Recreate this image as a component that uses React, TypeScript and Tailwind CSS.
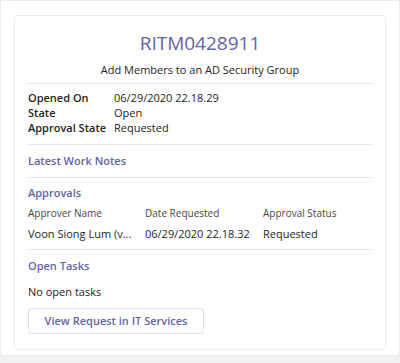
const FONT = "font-['Segoe_UI','Open_Sans',sans-serif]"

function Divider({ className = '' }: { className?: string }) {
  return <div className={`border-t border-[#e6e6e6] ${className}`} />
}

function Field({ label, value }: { label: string; value: string }) {
  return (
    <div className="flex leading-[15px]">
      <span className="w-[86px] shrink-0 font-semibold text-[#252423]">{label}</span>
      <span className="text-[#252423]">{value}</span>
    </div>
  )
}

export default function App() {
  return (
    <div className={`w-[400px] h-[363px] bg-[#f3f2f1] ${FONT}`}>
      <div className="h-[356px] bg-white border border-[#ebebeb] rounded-b-[4px] pt-[14px] px-[13px]">
        <div className="h-[335px] border border-[#ececec] rounded-[3px] px-[13px]">

          {/* Header */}
          <div className="pt-[13px] text-center">
            <div className="text-[19px] leading-[28px] text-[#6264a7]">RITM0428911</div>
            <div className="mt-[5px] text-[11px] leading-[16px] text-[#252423]">
              Add Members to an AD Security Group
            </div>
          </div>

          <Divider className="mt-[5px]" />

          {/* Fields */}
          <div className="pt-[6px] text-[11px]">
            <Field label="Opened On" value="06/29/2020 22.18.29" />
            <Field label="State" value="Open" />
            <Field label="Approval State" value="Requested" />
          </div>

          <Divider className="mt-[9px]" />

          <div className="pt-[6px] pb-[6px] text-[11px] font-semibold leading-[20px] text-[#6264a7]">Latest Work Notes</div>

          <Divider />

          {/* Approvals */}
          <div className="pt-[5px] text-[11px] font-semibold leading-[20px] text-[#6264a7]">Approvals</div>
          <div className="mt-[2px] grid grid-cols-[117px_118px_1fr] text-[10px] leading-[16px] text-[#484644]">
            <span>Approver Name</span>
            <span>Date Requested</span>
            <span>Approval Status</span>
          </div>
          <div className="mt-[4px] grid grid-cols-[117px_118px_1fr] text-[11px] leading-[18px] text-[#252423]">
            <span className="whitespace-nowrap">Voon Siong Lum (v...</span>
            <span>06/29/2020 22.18.32</span>
            <span>Requested</span>
          </div>

          <Divider className="mt-[6px]" />

          {/* Open tasks */}
          <div className="pt-[6px] text-[11px] font-semibold leading-[20px] text-[#6264a7]">Open Tasks</div>
          <div className="mt-[7px] text-[11px] leading-[18px] text-[#252423]">No open tasks</div>

          <button className="mt-[7px] w-[176px] h-[26px] border border-[#dfdff6] rounded-[3px] bg-white text-[11px] font-semibold text-[#6264a7]">
            View Request in IT Services
          </button>
        </div>
      </div>
    </div>
  )
}
